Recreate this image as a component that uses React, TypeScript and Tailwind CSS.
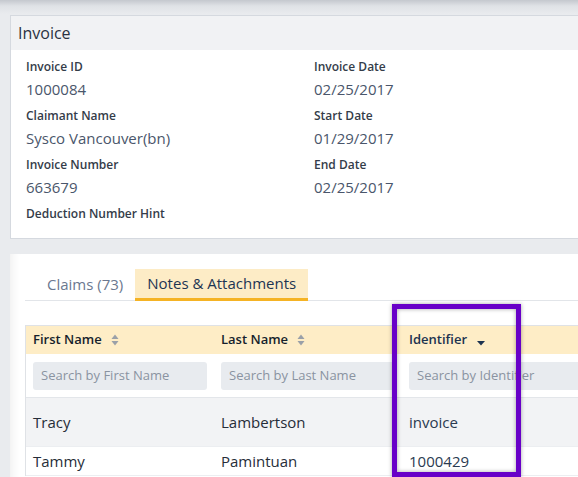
import React from "react"

const fields = [
  { label: "Invoice ID", value: "1000084" },
  { label: "Invoice Date", value: "02/25/2017" },
  { label: "Claimant Name", value: "Sysco Vancouver(bn)" },
  { label: "Start Date", value: "01/29/2017" },
  { label: "Invoice Number", value: "663679" },
  { label: "End Date", value: "02/25/2017" },
  { label: "Deduction Number Hint", value: "" },
]

const columns = [
  { name: "First Name", placeholder: "Search by First Name", sort: "none" },
  { name: "Last Name", placeholder: "Search by Last Name", sort: "none" },
  { name: "Identifier", placeholder: "Search by Identifier", sort: "desc" },
]

const rows = [
  { first: "Tracy", last: "Lambertson", id: "invoice" },
  { first: "Tammy", last: "Pamintuan", id: "1000429" },
]

function SortBoth() {
  return (
    <svg width="8" height="12" viewBox="0 0 8 12" className="ml-[9px] shrink-0">
      <path d="M4 0.5 L7.5 5 L0.5 5 Z" fill="#9aa0a8" />
      <path d="M4 11.5 L7.5 7 L0.5 7 Z" fill="#9aa0a8" />
    </svg>
  )
}

function SortDesc() {
  return (
    <svg width="8" height="5" viewBox="0 0 8 5" className="ml-[10px] mt-[6px] shrink-0">
      <path d="M0 0 L8 0 L4 4.5 Z" fill="#1c3350" />
    </svg>
  )
}

export default function App() {
  return (
    <div className="relative w-[578px] h-[477px] overflow-hidden bg-[#e9ebee] bg-[linear-gradient(to_bottom,#c4c8ce_0px,#dfe2e6_6px,#e9ebee_14px)] font-['Open_Sans',sans-serif] pt-[15px] pl-[10px]">
      {/* Invoice card */}
      <div className="w-[600px] bg-white border border-[#d5d9df]">
        <div className="h-[34px] bg-[#f1f2f4] flex items-center pl-[7px] text-[16px] text-[#2a3242]">
          Invoice
        </div>
        <div className="grid grid-cols-[288px_1fr] gap-y-[9px] pl-[15px] pt-[9px] pb-[16px]">
          {fields.map((f) => (
            <div key={f.label} className="flex flex-col">
              <span className="text-[12px] leading-[16px] font-semibold text-[#343c49]">{f.label}</span>
              {f.value && (
                <span className="mt-[4px] text-[15px] leading-[20px] text-[#4a566b]">{f.value}</span>
              )}
            </div>
          ))}
        </div>
      </div>

      {/* Tabs + table card */}
      <div className="mt-[15px] w-[600px] h-[300px] bg-white shadow-[inset_10px_0_10px_-8px_rgba(0,0,0,0.07)] pl-[15px] pt-[15px]">
        <div className="flex border-b border-[#e2e5e9] pl-[10px]">
          <div className="h-[31px] px-[12px] flex items-center text-[15px] text-[#6b7890] -mb-px">
            Claims (73)
          </div>
          <div className="h-[32px] px-[12px] flex items-center text-[15px] text-[#1d3553] bg-[#fdecc6] border-b-[3px] border-[#f5b324] -mb-px">
            Notes &amp; Attachments
          </div>
        </div>

        <div className="mt-[24px] border-t border-l border-[#dfe2e6]">
          {/* header */}
          <div className="flex h-[28px] bg-[#feedc6]">
            {columns.map((c) => (
              <div key={c.name} className="w-[188px] shrink-0 flex items-center pl-[7px] text-[13px] font-semibold text-[#161f2c]">
                <span className={c.sort === "desc" ? "text-[#1c3350]" : ""}>{c.name}</span>
                {c.sort === "desc" ? <SortDesc /> : <SortBoth />}
              </div>
            ))}
          </div>
          {/* filters */}
          <div className="flex h-[44px] items-center border-b border-[#e3e6ea]">
            {columns.map((c) => (
              <div key={c.name} className="w-[188px] shrink-0 pl-[7px] pr-[7px]">
                <div className="h-[28px] rounded-[3px] bg-[#e8ebef] flex items-center pl-[8px] text-[13px] text-[#8a93a1] whitespace-nowrap overflow-hidden">
                  {c.placeholder}
                </div>
              </div>
            ))}
          </div>
          {/* rows */}
          {rows.map((r, i) => (
            <div
              key={r.first}
              className={`flex items-center text-[15px] text-[#262d38] border-b border-[#eceef1] ${
                i === 0 ? "h-[49px] bg-[#f2f3f5]" : "h-[29px] bg-white"
              }`}
            >
              <div className="w-[188px] shrink-0 pl-[7px]">{r.first}</div>
              <div className="w-[188px] shrink-0 pl-[7px]">{r.last}</div>
              <div className="w-[188px] shrink-0 pl-[7px] text-[#2a3a50]">{r.id}</div>
            </div>
          ))}
        </div>
      </div>

      {/* highlight box */}
      <div className="absolute left-[392px] top-[304px] w-[129px] h-[173px] border-[5px] border-[#6800c8] shadow-[0_0_4px_rgba(0,0,0,0.35),inset_0_0_4px_rgba(0,0,0,0.35)]" />
    </div>
  )
}
